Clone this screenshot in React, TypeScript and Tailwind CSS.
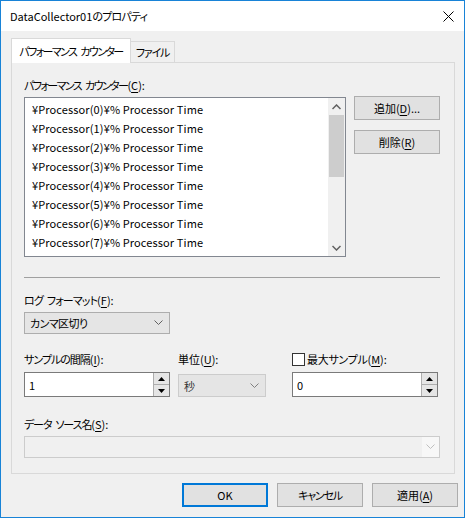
import React from "react";

const items = [0, 1, 2, 3, 4, 5, 6, 7];

// japanese runs get squeezed a bit so the proportional kana look like the UI font;
// spaces are kept as a fixed 4px gap since tracking eats them
function Jp({ children, t = "tracking-[-1px]" }: { children: string; t?: string }) {
  const parts = children.split(" ");
  return (
    <>
      {parts.map((p, i) => (
        <React.Fragment key={i}>
          {i > 0 && <span className="inline-block w-[4px]" />}
          <span className={t}>{p}</span>
        </React.Fragment>
      ))}
    </>
  );
}

function Key({ k }: { k: string }) {
  return <u className="underline-offset-2">{k}</u>;
}

function ChevronDown({ color = "#606060" }: { color?: string }) {
  return (
    <svg width="9" height="6" viewBox="0 0 9 6" fill="none">
      <path d="M0.5 0.5 L4.5 4.5 L8.5 0.5" stroke={color} strokeWidth="1" />
    </svg>
  );
}

function Spinner() {
  return (
    <div className="flex flex-col w-[16px] h-full border-l border-[#adadad] bg-[#f0f0f0]">
      <div className="flex-1 flex items-center justify-center border-b border-[#adadad] bg-[#e5e5e5]">
        <svg width="7" height="4" viewBox="0 0 7 4">
          <path d="M0 4 L3.5 0 L7 4 Z" fill="#000" />
        </svg>
      </div>
      <div className="flex-1 flex items-center justify-center bg-[#e5e5e5]">
        <svg width="7" height="4" viewBox="0 0 7 4">
          <path d="M0 0 L3.5 4 L7 0 Z" fill="#000" />
        </svg>
      </div>
    </div>
  );
}

function Btn({ children, primary }: { children: React.ReactNode; primary?: boolean }) {
  return (
    <div
      className={`w-full h-full flex items-center justify-center bg-[#e1e1e1] ${
        primary ? "border-2 border-[#0078d7]" : "border border-[#adadad]"
      }`}
    >
      {children}
    </div>
  );
}

export default function App() {
  return (
    <div className="w-[465px] h-[518px] border border-[#1883d7] bg-[#f0f0f0] flex flex-col text-[11px] leading-[16px] font-normal text-black [font-family:'Noto_Sans_CJK_JP',sans-serif] [font-feature-settings:'palt']">
      {/* title bar */}
      <div className="h-[30px] bg-white flex items-center justify-between pl-[9px] pr-[9px] shrink-0">
        <span>
          DataCollector01<Jp t="tracking-[-0.8px]">のプロパティ</Jp>
        </span>
        <svg width="11" height="11" viewBox="0 0 11 11" className="mr-[1px]">
          <path d="M0.5 0.5 L10.5 10.5 M10.5 0.5 L0.5 10.5" stroke="#000" strokeWidth="1" />
        </svg>
      </div>

      {/* tabs */}
      <div className="mt-[7px] ml-[10px] flex items-end h-[24px]">
        <div className="h-[25px] -mb-px relative z-10 bg-white border border-b-0 border-[#d9d9d9] w-[120px] flex items-center justify-center">
          <span>
            <Jp t="tracking-[-1.6px]">パフォーマンス カウンター</Jp>
          </span>
        </div>
        <div className="h-[21px] border border-l-0 border-b-0 border-[#d9d9d9] w-[44px] flex items-center justify-center">
          <span>
            <Jp t="tracking-[-1.2px]">ファイル</Jp>
          </span>
        </div>
      </div>

      {/* panel */}
      <div className="ml-[10px] w-[444px] border border-[#d9d9d9] px-[12px] pt-[14px] pb-[15px] flex flex-col">
        <div>
          <Jp t="tracking-[-1.6px]">パフォーマンス カウンター</Jp>(<Key k="C" />):
        </div>
        <div className="mt-[3px] flex gap-[8px] items-start">
          <div className="mt-[1px] w-[322px] h-[160px] border border-[#828790] bg-white flex">
            <div className="flex-1 pt-[1px] pl-[7px] tracking-[0.12px]">
              {items.map((i) => (
                <div key={i} className="h-[19px] flex items-center">
                  ¥Processor({i})¥% Processor Time
                </div>
              ))}
            </div>
            <div className="w-[17px] bg-[#f0f0f0] flex flex-col items-center">
              <div className="h-[17px] flex items-center justify-center">
                <svg width="9" height="6" viewBox="0 0 9 6">
                  <path d="M0.5 5 L4.5 1 L8.5 5" stroke="#606060" strokeWidth="1.5" fill="none" />
                </svg>
              </div>
              <div className="w-[15px] h-[62px] bg-[#cdcdcd]" />
              <div className="flex-1" />
              <div className="h-[17px] flex items-center justify-center">
                <svg width="9" height="6" viewBox="0 0 9 6">
                  <path d="M0.5 1 L4.5 5 L8.5 1" stroke="#606060" strokeWidth="1.5" fill="none" />
                </svg>
              </div>
            </div>
          </div>
          <div className="flex flex-col gap-[10px] w-[86px]">
            <div className="h-[24px]">
              <Btn>
                <span>
                  <Jp t="">追加</Jp>(<Key k="D" />)...
                </span>
              </Btn>
            </div>
            <div className="h-[24px]">
              <Btn>
                <span>
                  <Jp t="">削除</Jp>(<Key k="R" />)
                </span>
              </Btn>
            </div>
          </div>
        </div>

        <div className="mt-[20px] w-[416px] h-px bg-[#a0a0a0]" />

        <div className="mt-[14px]">
          <Jp t="tracking-[-0.9px]">ログ フォーマット</Jp>(<Key k="F" />):
        </div>
        <div className="mt-[4px] w-[146px] h-[22px] border border-[#adadad] bg-[#e5e5e5] flex items-center justify-between pl-[5px] pr-[6px]">
          <span>
            <Jp t="tracking-[-0.6px]">カンマ区切り</Jp>
          </span>
          <ChevronDown />
        </div>

        <div className="mt-[17px] flex">
          <div className="w-[154px] flex flex-col">
            <div>
              <Jp>サンプルの間隔</Jp>(<Key k="I" />):
            </div>
            <div className="mt-[5px] w-[146px] h-[25px] border border-[#7a7a7a] bg-white flex">
              <div className="flex-1 flex items-center pl-[4px]">1</div>
              <Spinner />
            </div>
          </div>
          <div className="w-[114px] flex flex-col">
            <div>
              <Jp t="">単位</Jp>(<Key k="U" />):
            </div>
            <div className="mt-[7px] w-[88px] h-[23px] border border-[#cccccc] bg-[#e5e5e5] flex items-center justify-between pl-[5px] pr-[6px] text-[#333]">
              <span>秒</span>
              <ChevronDown color="#808080" />
            </div>
          </div>
          <div className="flex flex-col">
            <div className="flex items-center gap-[2px]">
              <div className="w-[13px] h-[13px] border border-[#333333] bg-white" />
              <span>
                <Jp t="tracking-[-0.3px]">最大サンプル</Jp>(<Key k="M" />):
              </span>
            </div>
            <div className="mt-[5px] w-[146px] h-[25px] border border-[#7a7a7a] bg-white flex">
              <div className="flex-1 flex items-center pl-[4px]">0</div>
              <Spinner />
            </div>
          </div>
        </div>

        <div className="mt-[19px]">
          <Jp t="tracking-[-1.1px]">データ ソース名</Jp>(<Key k="S" />):
        </div>
        <div className="mt-[4px] w-[416px] h-[22px] border border-[#cccccc] bg-[#f0f0f0] flex justify-end">
          <div className="w-[17px] bg-[#f7f7f7] flex items-center justify-center">
            <ChevronDown color="#bfbfbf" />
          </div>
        </div>
      </div>

      {/* footer buttons */}
      <div className="mt-[9px] flex justify-end gap-[9px] pr-[6px]">
        <div className="w-[86px] h-[24px]">
          <Btn primary>OK</Btn>
        </div>
        <div className="w-[86px] h-[24px]">
          <Btn>
            <span>
              <Jp t="tracking-[-1.2px]">キャンセル</Jp>
            </span>
          </Btn>
        </div>
        <div className="w-[86px] h-[24px]">
          <Btn>
            <span>
              <Jp t="">適用</Jp>(<Key k="A" />)
            </span>
          </Btn>
        </div>
      </div>
    </div>
  );
}
